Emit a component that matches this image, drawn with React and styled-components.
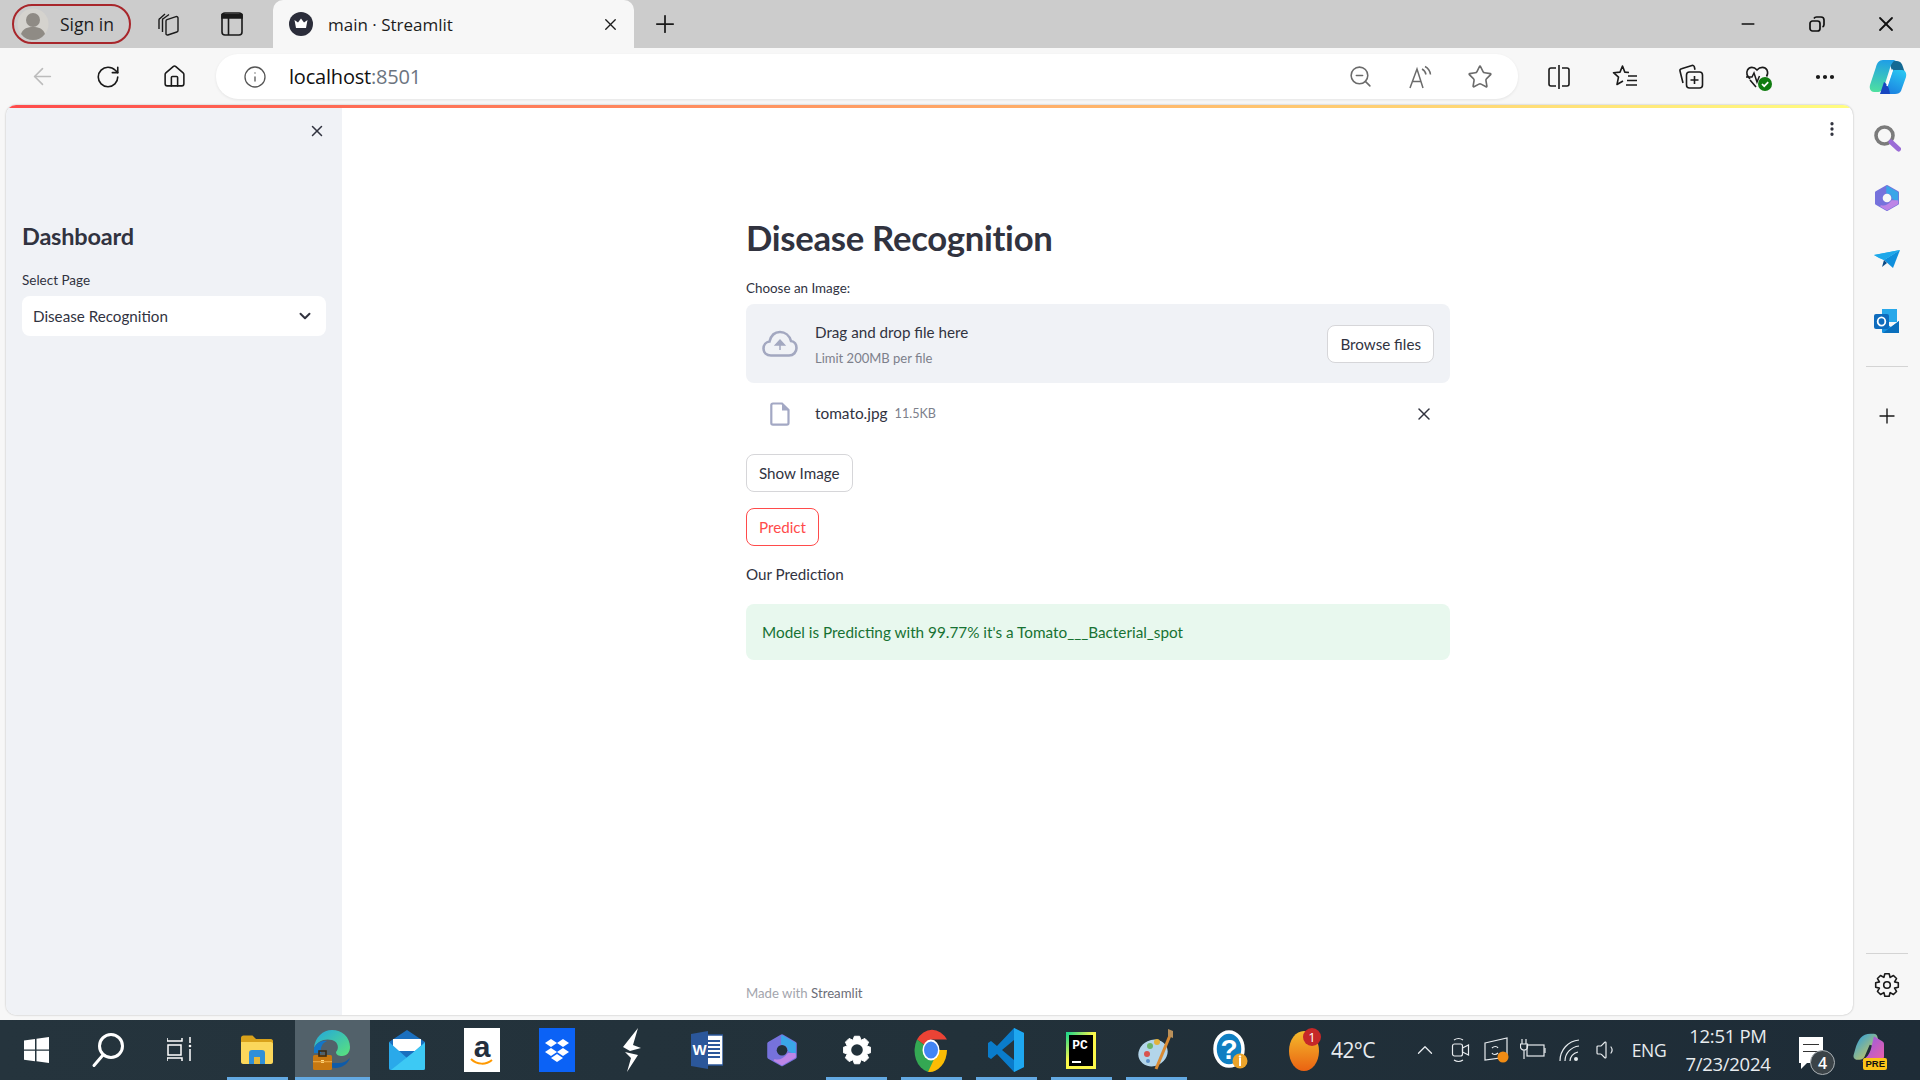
import React from "react";
import styled, { createGlobalStyle } from "styled-components";
import {
  ArrowLeft, RotateCw, Home, Info, ZoomOut, Star, X, Plus, Minus, MoreHorizontal,
  MoreVertical, ChevronDown, ChevronUp, Volume1,
} from "lucide-react";

const UI = `"Open Sans", "Noto Sans", sans-serif`;
const APP = `"Lato", "Noto Sans", sans-serif`;

const Global = createGlobalStyle`
  html, body { margin: 0; padding: 0; height: 100%; overflow: hidden; }
  #root { height: 100%; }
  * { box-sizing: border-box; }
`;

const Screen = styled.div`
  width: 1920px;
  height: 1080px;
  display: flex;
  flex-direction: column;
  background: #f7f7f7;
  font-family: ${UI};
`;

/* ---------- tab strip ---------- */
const TabStrip = styled.div`
  height: 48px;
  flex: none;
  background: #cccccc;
  display: flex;
  align-items: center;
  padding-left: 12px;
`;
const SignIn = styled.div`
  width: 119px;
  height: 40px;
  border: 2px solid #a8262b;
  border-radius: 20px;
  display: flex;
  align-items: center;
  gap: 11px;
  padding-left: 3px;
  font-size: 17.5px;
  color: #1c1c1c;
`;
const StripIcon = styled.div`
  width: ${(p) => p.$w}px;
  display: flex;
  justify-content: center;
  align-items: center;
  color: #1a1a1a;
`;
const Tab = styled.div`
  width: 361px;
  height: 48px;
  margin-left: 16px;
  background: #f7f7f7;
  border-radius: 10px 10px 0 0;
  display: flex;
  align-items: center;
  padding: 0 14px 0 16px;
  gap: 15px;
  font-size: 17px;
  color: #1c1c1c;
`;
const TabTitle = styled.span`
  flex: 1;
`;
const WindowButtons = styled.div`
  margin-left: auto;
  display: flex;
`;
const WindowButton = styled.div`
  width: 69px;
  height: 48px;
  display: flex;
  align-items: center;
  justify-content: center;
  color: #111;
`;

/* ---------- toolbar ---------- */
const Toolbar = styled.div`
  height: 57px;
  flex: none;
  background: #f7f7f7;
  display: flex;
  align-items: flex-start;
  padding: 6px 0 0 9px;
`;
const ToolButton = styled.div`
  width: ${(p) => p.$w || 66}px;
  height: 45px;
  flex: none;
  display: flex;
  align-items: center;
  justify-content: center;
  color: ${(p) => p.$color || "#1a1a1a"};
`;
const AddressBar = styled.div`
  width: 1302px;
  height: 45px;
  flex: none;
  margin-left: 9px;
  margin-right: 8px;
  background: #fff;
  border-radius: 22px;
  box-shadow: 0 1px 3px rgba(0, 0, 0, 0.08);
  display: flex;
  align-items: center;
  padding-left: 27px;
`;
const Url = styled.div`
  margin-left: 22px;
  flex: 1;
  font-size: 20px;
  color: #111;
  letter-spacing: -0.2px;
  span {
    color: #6c7480;
  }
`;

/* ---------- page + rail ---------- */
const Body = styled.div`
  flex: 1;
  display: flex;
  min-height: 0;
  padding-left: 6px;
`;
const Page = styled.div`
  width: 1847px;
  height: 910px;
  position: relative;
  display: flex;
  background: #fff;
  border-radius: 10px;
  overflow: hidden;
  box-shadow: 0 0 2px rgba(0, 0, 0, 0.3);
`;
const Decoration = styled.div`
  position: absolute;
  inset: 0 0 auto 0;
  height: 3px;
  background: linear-gradient(90deg, #ff4b4b, #fffd80);
`;
const Sidebar = styled.aside`
  width: 336px;
  flex: none;
  background: #f0f2f6;
  padding: 17px 16px 0 16px;
  color: #31333f;
  font-family: ${APP};
`;
const SideClose = styled.div`
  display: flex;
  justify-content: flex-end;
  height: 20px;
  color: #31333f;
`;
const SideTitle = styled.h2`
  margin: 78px 0 0;
  font-size: 23.5px;
  line-height: 32px;
  font-weight: 700;
  letter-spacing: -0.2px;
`;
const SideLabel = styled.div`
  margin-top: 18px;
  font-size: 13.5px;
  line-height: 20px;
`;
const Select = styled.div`
  margin-top: 6px;
  height: 40px;
  background: #fff;
  border-radius: 8px;
  display: flex;
  align-items: center;
  justify-content: space-between;
  padding: 0 12px 0 11px;
  font-size: 15.2px;
`;
const Main = styled.main`
  flex: 1;
  position: relative;
  display: flex;
  flex-direction: column;
  align-items: flex-start;
  padding: 0 0 0 404px;
  font-family: ${APP};
  color: #31333f;
`;
const Column = styled.div`
  width: 704px;
  flex: 1;
  display: flex;
  flex-direction: column;
  align-items: flex-start;
  padding-top: 109px;
`;
const Title = styled.h1`
  margin: 0;
  font-size: 34.7px;
  line-height: 48px;
  font-weight: 700;
  letter-spacing: -0.3px;
`;
const FieldLabel = styled.div`
  margin-top: 16px;
  font-size: 13.4px;
  line-height: 20px;
`;
const Uploader = styled.div`
  margin-top: 6px;
  width: 100%;
  height: 79px;
  background: #f0f2f6;
  border-radius: 8px;
  display: flex;
  align-items: center;
  padding: 0 16px;
`;
const UploadIcon = styled.div`
  width: 36px;
  display: flex;
  justify-content: center;
  color: #a3a8c0;
`;
const UploadText = styled.div`
  margin-left: 17px;
  flex: 1;
`;
const DragText = styled.div`
  font-size: 15.2px;
  line-height: 24px;
`;
const LimitText = styled.div`
  font-size: 13px;
  line-height: 20px;
  margin-top: 4px;
  color: #7d808b;
`;
const Button = styled.div`
  height: 38px;
  padding: 0 12px;
  background: #fff;
  border: 1px solid ${(p) => (p.$accent ? "#ff4b4b" : "#d6d6d9")};
  border-radius: 8px;
  color: ${(p) => (p.$accent ? "#ff4b4b" : "#31333f")};
  display: flex;
  align-items: center;
  font-size: 15.2px;
  margin-top: ${(p) => p.$top || 0}px;
`;
const FileRow = styled.div`
  width: 100%;
  height: 50px;
  margin-top: 6px;
  display: flex;
  align-items: center;
  padding: 0 16px;
`;
const FileName = styled.span`
  margin-left: 17px;
  font-size: 15.4px;
  margin-top: -2px;
`;
const FileSize = styled.span`
  margin-left: 7px;
  font-size: 12.6px;
  color: #7d808b;
  flex: 1;
  margin-top: -2px;
`;
const Prediction = styled.div`
  margin-top: 16px;
  font-size: 15.2px;
  line-height: 24px;
`;
const Alert = styled.div`
  margin-top: 18px;
  width: 100%;
  height: 56px;
  background: #e8f8ee;
  border-radius: 8px;
  display: flex;
  align-items: center;
  padding-left: 16px;
  color: #177233;
  font-size: 15.3px;
`;
const Footer = styled.div`
  margin-top: auto;
  margin-bottom: 12px;
  font-size: 13.2px;
  line-height: 20px;
  color: #a3a5ad;
  span {
    color: #6c6e78;
  }
`;
const PageMenu = styled.div`
  position: absolute;
  top: 15px;
  right: 12px;
  color: #31333f;
`;
const Rail = styled.div`
  flex: 1;
  display: flex;
  flex-direction: column;
  align-items: center;
  padding-top: 2px;
  height: 910px;
`;
const RailIcon = styled.div`
  height: 61px;
  flex: none;
  display: flex;
  align-items: center;
  justify-content: center;
  color: #1a1a1a;
`;
const RailRule = styled.div`
  width: 42px;
  height: 1px;
  background: #d4d4d4;
  flex: none;
  margin: ${(p) => p.$margin};
`;

/* ---------- taskbar ---------- */
const Taskbar = styled.div`
  height: 60px;
  flex: none;
  margin-top: auto;
  background: linear-gradient(90deg, #25343d, #22313a 50%, #1e2c37);
  display: flex;
  align-items: stretch;
  color: #fff;
`;
const SystemSlot = styled.div`
  width: 72px;
  display: flex;
  align-items: center;
  justify-content: center;
`;
const Apps = styled.div`
  display: flex;
  margin-left: 4px;
`;
const AppSlot = styled.div`
  width: 74.9px;
  position: relative;
  display: flex;
  align-items: center;
  justify-content: center;
  background: ${(p) => (p.$active ? "#52616a" : "transparent")};
  &::after {
    content: "";
    display: ${(p) => (p.$open ? "block" : "none")};
    position: absolute;
    bottom: 0;
    left: ${(p) => (p.$active ? 0 : 7)}px;
    right: ${(p) => (p.$active ? 0 : 7)}px;
    height: 3px;
    background: #63a9e2;
  }
`;
const Tray = styled.div`
  margin-left: auto;
  display: flex;
  align-items: center;
  padding-right: 15px;
  color: #e8ecef;
`;
const Temp = styled.span`
  margin-left: 10px;
  font-size: 21px;
  width: 75px;
  letter-spacing: -0.6px;
`;
const TrayIcon = styled.div`
  width: ${(p) => p.$w || 36}px;
  display: flex;
  justify-content: center;
  align-items: center;
`;
const Lang = styled.div`
  width: 48px;
  text-align: center;
  font-size: 17.5px;
  letter-spacing: -0.3px;
`;
const Clock = styled.div`
  width: 110px;
  text-align: center;
  font-size: 18.5px;
  line-height: 28px;
  margin: 0 6px 0 0;
  letter-spacing: -0.3px;
`;

/* ---------- drawn icons ---------- */
const gearPath = (cx, cy, outer, inner, teeth) => {
  const pts = [];
  const step = (Math.PI * 2) / teeth;
  for (let i = 0; i < teeth; i++) {
    const a = i * step - Math.PI / 2;
    [[-0.5, inner], [-0.24, outer], [0.24, outer], [0.5, inner]].forEach(([k, r]) => {
      pts.push(`${(cx + Math.cos(a + k * step) * r).toFixed(2)} ${(cy + Math.sin(a + k * step) * r).toFixed(2)}`);
    });
  }
  return `M${pts.join("L")}z`;
};

const Avatar = () => (
  <svg width="32" height="32" viewBox="0 0 32 32">
    <circle cx="16" cy="16" r="15.5" fill="#d5d3ce" />
    <circle cx="16" cy="12" r="7" fill="#8f8b85" />
    <path d="M4 26c2-6 7-7 12-7s10 1 12 7a15 15 0 0 1-24 0z" fill="#8f8b85" />
  </svg>
);
const Workspaces = () => (
  <svg width="26" height="26" viewBox="0 0 26 26" fill="none" stroke="#1a1a1a" strokeWidth="1.400" strokeLinejoin="round">
    <path d="M3 18V9c0-.5.2-1 .7-1.300L9 3" />
    <path d="M6.500 21V9c0-.5.2-1 .7-1.300L13 3.500" />
    <path d="M10 10c0-.6.4-1.200 1-1.400l9-3c1-.3 2 .4 2 1.400v12.500c0 .7-.5 1.300-1.200 1.500l-9 3c-1 .3-1.800-.4-1.800-1.300z" />
  </svg>
);
const TabActions = () => (
  <svg width="24" height="26" viewBox="0 0 24 26" fill="none" stroke="#1a1a1a" strokeWidth="1.600">
    <rect x="2" y="2" width="20" height="22" rx="3" />
    <path d="M2 3.500h20v3.500H2z" fill="#1a1a1a" />
    <path d="M8.500 7v17" />
  </svg>
);
const Favicon = () => (
  <svg width="24" height="24" viewBox="0 0 24 24">
    <circle cx="12" cy="12" r="12" fill="#2b2d3a" />
    <path d="M5.500 8l3.500 2.500L12 6.500l3 4L18.500 8l-1.500 8H7z" fill="#fff" />
  </svg>
);
const Restore = () => (
  <svg width="18" height="18" viewBox="0 0 18 18" fill="none" stroke="#111" strokeWidth="1.700">
    <rect x="2" y="6" width="10" height="10" rx="2.500" />
    <path d="M6 3.500C6.500 2.500 7.500 2 8.500 2H13c1.700 0 3 1.300 3 3v4.500c0 1-.5 2-1.500 2.500" />
  </svg>
);
const ReadAloud = () => (
  <svg width="26" height="26" viewBox="0 0 26 26" fill="none" stroke="#6b6b6b" strokeWidth="1.500">
    <path d="M3 24L10 5l6 19M5.500 17.500h9" />
    <path d="M15 5c2 1 3.500 3 4 5.500M18 2.500c3 1.500 5 4.500 5.500 8" />
  </svg>
);
const Split = () => (
  <svg width="24" height="26" viewBox="0 0 24 26" fill="none" stroke="#1a1a1a" strokeWidth="1.600">
    <path d="M9 4H4a2 2 0 0 0-2 2v14a2 2 0 0 0 2 2h5M15 4h5a2 2 0 0 1 2 2v14a2 2 0 0 1-2 2h-5" />
    <path d="M12 1v24" />
  </svg>
);
const Favorites = () => (
  <svg width="26" height="26" viewBox="0 0 26 26" fill="none" stroke="#1a1a1a" strokeWidth="1.600" strokeLinejoin="round">
    <path d="M17 8.500l-4.200-.4L10.500 2 8 8.100 1.500 8.700l5 4.500L5 20.500l6-3.500" />
    <path d="M16 12h9M15 16.500h10M14 21h11" />
  </svg>
);
const Collections = () => (
  <svg width="26" height="28" viewBox="0 0 26 28" fill="none" stroke="#1a1a1a" strokeWidth="1.600">
    <path d="M5 20L2 8c-.3-1.200.3-2 1.500-2.300L14 2.500c1-.3 2 .2 2.300 1.200l.7 3" />
    <rect x="8.500" y="9" width="16" height="16" rx="3" />
    <path d="M16.500 13v8M12.500 17h8" />
  </svg>
);
const Health = () => (
  <svg width="30" height="30" viewBox="0 0 30 30" fill="none">
    <path d="M6 17C3 14 2 11 3.500 8 5.500 4.500 10 4.500 13 8c3-3.500 8-3.500 10 0 1 2 1 4-.5 6.500M12 25l-6-7" stroke="#1a1a1a" strokeWidth="1.600" />
    <path d="M2 15h6l2-4 3 9 2.500-6" stroke="#1a1a1a" strokeWidth="1.500" />
    <circle cx="21" cy="22" r="7" fill="#107c10" />
    <path d="M18 22l2.200 2.200 4-4" stroke="#fff" strokeWidth="1.700" />
  </svg>
);
const Copilot = () => (
  <svg width="38" height="36" viewBox="0 0 38 36">
    <defs>
      <linearGradient id="copA" x1="0.4" y1="0" x2="0.3" y2="1">
        <stop offset="0" stopColor="#1f9fe6" />
        <stop offset="1" stopColor="#4fe0a0" />
      </linearGradient>
      <linearGradient id="copB" x1="0.8" y1="0" x2="0.3" y2="1">
        <stop offset="0" stopColor="#2ac6f2" />
        <stop offset="1" stopColor="#1a7fe0" />
      </linearGradient>
    </defs>
    <path d="M20 2h8c3 0 5 2 6 6l2 6c-3-3-8-3-13-2z" fill="#136a94" />
    <path d="M14 1h13c-3 1-5 4-6 8L15 28c-1 3-3 5-7 5H5c-3 0-5-3-4-7L7 8c1-4 3-7 7-7z" fill="url(#copA)" />
    <path d="M26 11h7c3 0 5 3 4 7l-5 14c-1 2-3 3-6 3H12c3-1 5-3 6-7l5-15c.5-1.500 1.500-2 3-2z" fill="url(#copB)" />
    <path d="M11 35l4-12c2 1 5 4 6 12z" fill="#1746c0" />
    <path d="M23.500 10.500L18 27" stroke="#fff" strokeWidth="1.500" />
  </svg>
);
const RailSearch = () => (
  <svg width="28" height="28" viewBox="0 0 28 28" fill="none">
    <circle cx="11.500" cy="11.500" r="8.500" stroke="#7b7b7b" strokeWidth="3.600" />
    <path d="M18 18l7.500 7" stroke="#9b6cd6" strokeWidth="5" strokeLinecap="round" />
  </svg>
);
const M365 = ({ size = 26, hole = "#f7f7f7" }) => (
  <svg width={size} height={size * 1.08} viewBox="0 0 26 28">
    <path d="M13 2.500l10.500 6v11L13 25.500 2.500 19.500v-11z" fill="#7672dc" stroke="#7672dc" strokeWidth="3" strokeLinejoin="round" />
    <path d="M13 2.500L23.500 8.500V17l-5-3c0-3-2.500-5-5.500-5z" fill="#3aa6e8" stroke="#3aa6e8" strokeWidth="1.500" strokeLinejoin="round" />
    <path d="M23.500 17v2.500L13 25.500l-6-3.500c4 1 8-1 11-5z" fill="#bd85e6" stroke="#bd85e6" strokeWidth="1.500" strokeLinejoin="round" />
    <circle cx="13" cy="14" r="4.300" fill={hole} />
  </svg>
);
const Send = () => (
  <svg width="26" height="20" viewBox="0 0 26 20">
    <path d="M0 5L26 0 10 10z" fill="#29b6f0" />
    <path d="M26 0l-7 18-9-8z" fill="#0f8fdc" />
    <path d="M10 10l-2 7 5-4z" fill="#0b4a86" />
    <path d="M0 5l5 3 5 2 16-10z" fill="#1ea8ea" />
  </svg>
);
const Outlook = () => (
  <svg width="26" height="26" viewBox="0 0 26 26">
    <rect x="8" y="1" width="15" height="13" fill="#28a8ea" />
    <path d="M8 13l9 6 8-6v11a1 1 0 0 1-1 1H9a1 1 0 0 1-1-1z" fill="#1490df" />
    <path d="M25 13v12H9z" fill="#0a6fbc" />
    <rect x="0" y="6" width="15" height="15" rx="2" fill="#0f6cbd" />
    <ellipse cx="7.500" cy="13.500" rx="3.800" ry="4.200" fill="none" stroke="#fff" strokeWidth="1.800" />
  </svg>
);
const WinLogo = () => (
  <svg width="25" height="26" viewBox="0 0 25 26" fill="#fff">
    <path d="M0 3.500l11-1.500v10.500H0zM12.500 1.800L25 0v12.500H12.500zM0 13.800h11v10.500L0 22.800zM12.500 13.800H25V26l-12.500-1.800z" />
  </svg>
);
const TaskSearch = () => (
  <svg width="34" height="36" viewBox="0 0 34 36" fill="none" stroke="#fff" strokeWidth="3">
    <circle cx="20" cy="14" r="11.500" />
    <path d="M12 23L3 33.500" strokeLinecap="round" />
  </svg>
);
const TaskView = () => (
  <svg width="26" height="26" viewBox="0 0 26 26" fill="none" stroke="#fff" strokeWidth="1.500">
    <path d="M0 1v3h15V1M0 24v-3h15v3" />
    <rect x="1" y="8" width="13" height="10" />
    <path d="M23 0v6M23 12v12" />
    <circle cx="23" cy="9" r="1.300" fill="#fff" stroke="none" />
  </svg>
);
const Explorer = () => (
  <svg width="32" height="30" viewBox="0 0 32 30">
    <path d="M0 3c0-1.500 1-2.500 2.500-2.500h9L15 4h15c1 0 2 1 2 2v3H0z" fill="#d9a21b" />
    <path d="M0 7h30c1 0 2 1 2 2v18c0 1-1 2-2 2H2c-1 0-2-1-2-2z" fill="#fbd75b" />
    <path d="M8 29V18c0-2 1-3 3-3h10c2 0 3 1 3 3v11h-5v-7h-6v7z" fill="#2f8fd8" />
    <rect x="13" y="22" width="6" height="7" fill="#e7b93a" />
  </svg>
);
const Edge = () => (
  <svg width="38" height="40" viewBox="0 0 38 40">
    <defs>
      <linearGradient id="edgeA" x1="0" y1="0" x2="1" y2="1">
        <stop offset="0" stopColor="#22a6e0" />
        <stop offset="1" stopColor="#5be37a" />
      </linearGradient>
    </defs>
    <path d="M1 18C2 7 10 0 19 0c10 0 18 7 18 17 0 5-3 9-8 9-3 0-6-1-6-4 3-3 3-10-4-12C12 8 4 11 1 18z" fill="url(#edgeA)" />
    <path d="M1 18c3-6 9-8 13-7-5 2-7 7-6 12H1z" fill="#1376c9" />
    <path d="M37 28c-3 8-12 12-20 9l-2-4h11c4 0 8-2 11-5z" fill="#0f5ba8" />
    <rect x="0" y="25" width="19" height="15" rx="1.500" fill="#c87810" />
    <rect x="6" y="21" width="7" height="5" fill="none" stroke="#3b2a12" strokeWidth="1.600" />
    <rect x="8" y="30" width="3" height="3" fill="#ffe08a" />
    <path d="M0 31h19v1.300H0z" fill="#e8a33d" />
  </svg>
);
const Mail = () => (
  <svg width="36" height="40" viewBox="0 0 36 40">
    <path d="M0 12L18 0l18 12v26a2 2 0 0 1-2 2H2a2 2 0 0 1-2-2z" fill="#1a6fbe" />
    <path d="M4 9h28v12H4z" fill="#fff" />
    <path d="M0 12l18 16L36 12v26a2 2 0 0 1-2 2H2a2 2 0 0 1-2-2z" fill="#2aa9ea" />
    <path d="M36 13v25a2 2 0 0 1-2 2H2z" fill="#3dc9f4" />
  </svg>
);
const AmazonTile = styled.div`
  width: 36px;
  height: 44px;
  background: #fff;
  color: #232f3e;
  display: flex;
  align-items: flex-start;
  justify-content: center;
  font: 700 30px/38px "Liberation Sans", sans-serif;
  position: relative;
  svg {
    position: absolute;
    left: 6px;
    bottom: 6px;
  }
`;
const Dropbox = () => (
  <svg width="36" height="44" viewBox="0 0 36 44">
    <rect width="36" height="44" fill="#0b62f6" />
    <path d="M12 11l6 4-6 4-6-4zM24 11l6 4-6 4-6-4zM12 20l6 4-6 4-6-4zM24 20l6 4-6 4-6-4zM18 26l6 4-6 4-6-4z" fill="#fff" />
  </svg>
);
const Spark = () => (
  <svg width="20" height="44" viewBox="0 0 20 44" fill="#fff">
    <path d="M16 0L1 19l7 4 11-3-8-3z" />
    <path d="M3 24l13 3-11 17 4-14z" />
  </svg>
);
const Word = () => (
  <svg width="32" height="38" viewBox="0 0 32 38">
    <rect x="10" y="4" width="22" height="30" fill="#fff" stroke="#2b579a" strokeWidth="1.500" />
    <path d="M15 10h14M15 14h14M15 18h14M15 22h14M15 26h14" stroke="#2b579a" strokeWidth="1.800" />
    <path d="M0 3l17-3v38L0 35z" fill="#2b579a" />
    <text x="8.500" y="24" fontSize="15" fontWeight="700" fill="#fff" textAnchor="middle" fontFamily="Liberation Sans">W</text>
  </svg>
);
const TaskGear = () => (
  <svg width="28" height="30" viewBox="0 0 28 30">
    <path d={gearPath(14, 15, 14, 10.5, 8)} fill="#fff" stroke="#fff" strokeWidth="1" strokeLinejoin="round" />
    <circle cx="14" cy="15" r="5.800" fill="#22313a" />
  </svg>
);
const RailGear = () => (
  <svg width="26" height="26" viewBox="0 0 26 26" fill="none" stroke="#1a1a1a" strokeWidth="1.600" strokeLinejoin="round">
    <path d={gearPath(13, 13, 11.500, 8.200, 8)} />
    <circle cx="13" cy="13" r="3.300" />
  </svg>
);
const Chrome = () => (
  <svg width="36" height="44" viewBox="0 0 36 36" preserveAspectRatio="none">
    <path d="M18 18L4 9.500A18 18 0 0 1 34 9.500H18z" fill="#ea4335" />
    <path d="M18 18L4 9.500A18 18 0 0 0 15 36l8-9z" fill="#34a853" />
    <path d="M18 18h16A18 18 0 0 1 15 36l8-14z" fill="#fbbc05" />
    <circle cx="18" cy="18" r="8.500" fill="#fff" />
    <circle cx="18" cy="18" r="7" fill="#4285f4" />
  </svg>
);
const VSCode = () => (
  <svg width="36" height="44" viewBox="0 0 36 44">
    <path d="M26 0l10 5v34l-10 5-17-18-6 5-3-2V15l3-2 6 5z" fill="#0a7ccb" />
    <path d="M26 0l10 5v34l-10 5z" fill="#1ea7f0" />
    <path d="M26 12L14 22l12 10z" fill="#25343d" />
  </svg>
);
const PyCharmTile = styled.div`
  width: 30px;
  height: 37px;
  background: #000;
  border: 3px solid;
  border-image: linear-gradient(135deg, #21d789, #fcf84a 45%) 1;
  color: #fff;
  font: 700 13px/15px "Liberation Mono", monospace;
  padding: 3px 0 0 3px;
  position: relative;
  &::after {
    content: "";
    position: absolute;
    left: 3px;
    bottom: 3px;
    width: 9px;
    height: 2px;
    background: #fff;
  }
`;
const Paint = () => (
  <svg width="36" height="42" viewBox="0 0 36 42">
    <ellipse cx="15" cy="24" rx="15" ry="13" transform="rotate(-25 15 24)" fill="#b3d5ea" />
    <circle cx="9" cy="25" r="3" fill="#d9534f" />
    <circle cx="12" cy="17" r="3" fill="#6bb56b" />
    <circle cx="19" cy="13" r="3" fill="#e3b23c" />
    <circle cx="10" cy="32" r="2" fill="#5a8fc9" />
    <path d="M33 4L18 40" stroke="#d98a33" strokeWidth="3" />
    <path d="M30 0l5 2 0 7-5-2z" fill="#b9905a" />
  </svg>
);
const Help = () => (
  <svg width="36" height="42" viewBox="0 0 36 42">
    <ellipse cx="16" cy="20" rx="14" ry="17" fill="#0f7fc2" stroke="#fff" strokeWidth="3.500" />
    <text x="16" y="30" fontSize="28" fontWeight="700" fill="#fff" textAnchor="middle" fontFamily="Liberation Sans">?</text>
    <circle cx="27" cy="32" r="7.500" fill="#eca42b" />
    <path d="M27 29v8" stroke="#fff" strokeWidth="2" />
    <circle cx="27" cy="27.500" r="1.200" fill="#fff" />
  </svg>
);
const Weather = () => (
  <svg width="32" height="46" viewBox="0 0 32 46">
    <defs>
      <linearGradient id="sun" x1="0" y1="0" x2="0" y2="1">
        <stop offset="0" stopColor="#f4bb2c" />
        <stop offset="1" stopColor="#ea6212" />
      </linearGradient>
    </defs>
    <ellipse cx="15" cy="24" rx="15" ry="20" fill="url(#sun)" />
    <circle cx="23" cy="10" r="9" fill="#c62828" />
    <text x="23" y="15" fontSize="13" fill="#fff" textAnchor="middle" fontFamily="Open Sans">1</text>
  </svg>
);
const Meet = () => (
  <svg width="20" height="26" viewBox="0 0 20 26" fill="none" stroke="#e8ecef" strokeWidth="1.200">
    <rect x="1.500" y="7" width="10" height="12" rx="2" />
    <path d="M11.500 11l6-3v10l-6-3z" />
    <path d="M3 3c3-2 6-2 9 0M3 23c3 2 6 2 9 0" />
  </svg>
);
const Capture = () => (
  <svg width="26" height="28" viewBox="0 0 26 28" fill="none" stroke="#e8ecef" strokeWidth="1.200">
    <path d="M1 7l22-5v19L1 24z" />
    <path d="M8 12c2-2 5-2 6 0M14 17c-2 2-5 2-6 0" />
    <circle cx="19" cy="21" r="5.500" fill="#f28c13" stroke="none" />
  </svg>
);
const Battery = () => (
  <svg width="26" height="24" viewBox="0 0 26 24" fill="none" stroke="#e8ecef" strokeWidth="1.200">
    <rect x="7" y="7" width="17" height="11" />
    <path d="M25 10v5" />
    <path d="M2 1v5M6 1v5M0.500 6h7v3c0 2-2 3-3.500 3S.5 11 .5 9zM4 12v9" />
  </svg>
);
const Wifi = () => (
  <svg width="22" height="24" viewBox="0 0 22 24" fill="none" stroke="#e8ecef" strokeWidth="1.200">
    <path d="M1 23C1 12 9 3 20 2M6 23c0-8 6-14 14-15M11 23c0-4 3-8 8-9" />
    <circle cx="17" cy="21" r="2" fill="#e8ecef" stroke="none" />
  </svg>
);
const Notify = styled.div`
  position: relative;
  width: 24px;
  height: 26px;
  background: #fff;
  &::after {
    content: "";
    position: absolute;
    left: 2px;
    top: 26px;
    border-top: 6px solid #fff;
    border-right: 6px solid transparent;
  }
`;
const NotifyLines = styled.div`
  margin: 7px 4px 0;
  height: 8px;
  border-top: 1.500px solid #333;
  border-bottom: 1.500px solid #333;
`;
const NotifyCount = styled.div`
  position: absolute;
  left: 11px;
  top: 13px;
  width: 25px;
  height: 25px;
  border-radius: 50%;
  background: #3b4348;
  border: 1.500px solid #aab0b4;
  display: flex;
  align-items: center;
  justify-content: center;
  font-size: 16px;
  font-weight: 600;
  color: #fff;
  z-index: 1;
`;
const PreWrap = styled.div`
  position: relative;
  width: 34px;
  height: 40px;
  span {
    position: absolute;
    right: -1px;
    bottom: 0;
    background: #fcc419;
    color: #111;
    border-radius: 2px;
    padding: 0 2px;
    font: 700 9.500px/12px "Liberation Sans", sans-serif;
  }
`;
const CopilotColor = () => (
  <svg width="32" height="36" viewBox="0 0 38 38">
    <defs>
      <linearGradient id="cpreA" x1="0" y1="0" x2="1" y2="1">
        <stop offset="0" stopColor="#1f9be8" />
        <stop offset="1" stopColor="#f6d23c" />
      </linearGradient>
      <linearGradient id="cpreB" x1="0" y1="0" x2="1" y2="1">
        <stop offset="0" stopColor="#8a5ce8" />
        <stop offset="1" stopColor="#ef5fa7" />
      </linearGradient>
    </defs>
    <path d="M22 2h4c2 0 3.500 1 4 3l4 14-13-4-6 14c-1 2-3 4-6 4H6C3 33 1 30 2 27l2-7C7 9 12 2 22 2z" fill="url(#cpreA)" />
    <path d="M26 5l10 6c1.500 1 2 2 2 4v14c0 3-3 6-7 6H12l4-4c4-4 6-8 7-13z" fill="url(#cpreB)" />
  </svg>
);

const taskApps = [
  { icon: <Explorer />, open: true },
  { icon: <Edge />, open: true, active: true },
  { icon: <Mail /> },
  { icon: <AmazonTile>a<svg width="24" height="8" viewBox="0 0 24 8" fill="none"><path d="M1 1c6 6 15 6 21 1" stroke="#f90" strokeWidth="2" /></svg></AmazonTile> },
  { icon: <Dropbox /> },
  { icon: <Spark /> },
  { icon: <Word /> },
  { icon: <M365 size={32} hole="#22313a" /> },
  { icon: <TaskGear />, open: true },
  { icon: <Chrome />, open: true },
  { icon: <VSCode />, open: true },
  { icon: <PyCharmTile>PC</PyCharmTile>, open: true },
  { icon: <Paint />, open: true },
  { icon: <Help /> },
];

const CloudUpload = () => (
  <svg width="36" height="27" viewBox="0 0 36 27" fill="none" stroke="currentColor" strokeWidth="2.600">
    <path d="M9 25.500C4.500 25.500 1.500 22.500 1.500 18.500c0-3.500 2.500-6.500 6-7C9 5.500 13 2 18 2c5 0 9.500 3.500 11 9 3.500.5 5.500 3.500 5.500 7 0 4-3 7.500-7.500 7.500z" />
    <path d="M18 20v-9M13.500 15h9l-4.500-5z" fill="currentColor" strokeWidth="1.500" />
  </svg>
);
const FileIcon = () => (
  <svg width="20" height="24" viewBox="0 0 20 24" fill="none" stroke="#a3a8c4" strokeWidth="2.200">
    <path d="M3 1.500h9l6.500 6.500v13c0 1-.7 1.700-1.700 1.700H3c-1 0-1.700-.7-1.700-1.700V3.200C1.300 2.200 2 1.500 3 1.500z" />
    <path d="M12 1.500v7h6.500z" fill="#a3a8c4" stroke="none" />
  </svg>
);

export default function App() {
  return (
    <Screen>
      <Global />
      <TabStrip>
        <SignIn><Avatar />Sign in</SignIn>
        <StripIcon $w={76}><Workspaces /></StripIcon>
        <StripIcon $w={50}><TabActions /></StripIcon>
        <Tab>
          <Favicon />
          <TabTitle>main · Streamlit</TabTitle>
          <X size={19} strokeWidth={1.700} />
        </Tab>
        <StripIcon $w={62}><Plus size={28} strokeWidth={1.500} /></StripIcon>
        <WindowButtons>
          <WindowButton><Minus size={20} strokeWidth={1.800} /></WindowButton>
          <WindowButton><Restore /></WindowButton>
          <WindowButton><X size={24} strokeWidth={1.800} /></WindowButton>
        </WindowButtons>
      </TabStrip>

      <Toolbar>
        <ToolButton $color="#bcbcbc"><ArrowLeft size={27} strokeWidth={1.400} /></ToolButton>
        <ToolButton><RotateCw size={26} strokeWidth={1.500} /></ToolButton>
        <ToolButton><Home size={25} strokeWidth={1.500} /></ToolButton>
        <AddressBar>
          <Info size={24} strokeWidth={1.300} color="#555" />
          <Url>localhost<span>:8501</span></Url>
          <ToolButton $w={60} $color="#6b6b6b"><ZoomOut size={25} strokeWidth={1.500} /></ToolButton>
          <ToolButton $w={60}><ReadAloud /></ToolButton>
          <ToolButton $w={60} $color="#6b6b6b"><Star size={26} strokeWidth={1.500} /></ToolButton>
          <ToolButton $w={8} />
        </AddressBar>
        <ToolButton><Split /></ToolButton>
        <ToolButton><Favorites /></ToolButton>
        <ToolButton><Collections /></ToolButton>
        <ToolButton $w={69}><Health /></ToolButton>
        <ToolButton $w={64}><MoreHorizontal size={24} strokeWidth={2.200} /></ToolButton>
        <ToolButton $w={62}><Copilot /></ToolButton>
      </Toolbar>

      <Body>
        <Page>
          <Decoration />
          <Sidebar>
            <SideClose><X size={18} strokeWidth={2} /></SideClose>
            <SideTitle>Dashboard</SideTitle>
            <SideLabel>Select Page</SideLabel>
            <Select>
              Disease Recognition
              <ChevronDown size={18} strokeWidth={2.600} />
            </Select>
          </Sidebar>
          <Main>
            <PageMenu><MoreVertical size={18} strokeWidth={2.400} /></PageMenu>
            <Column>
              <Title>Disease Recognition</Title>
              <FieldLabel>Choose an Image:</FieldLabel>
              <Uploader>
                <UploadIcon><CloudUpload /></UploadIcon>
                <UploadText>
                  <DragText>Drag and drop file here</DragText>
                  <LimitText>Limit 200MB per file</LimitText>
                </UploadText>
                <Button>Browse files</Button>
              </Uploader>
              <FileRow>
                <UploadIcon><FileIcon /></UploadIcon>
                <FileName>tomato.jpg</FileName>
                <FileSize>11.5KB</FileSize>
                <X size={20} strokeWidth={1.800} />
              </FileRow>
              <Button $top={15}>Show Image</Button>
              <Button $top={16} $accent>Predict</Button>
              <Prediction>Our Prediction</Prediction>
              <Alert>Model is Predicting with 99.77% it's a Tomato___Bacterial_spot</Alert>
              <Footer>Made with <span>Streamlit</span></Footer>
            </Column>
          </Main>
        </Page>
        <Rail>
          <RailIcon><RailSearch /></RailIcon>
          <RailIcon><M365 /></RailIcon>
          <RailIcon><Send /></RailIcon>
          <RailIcon><Outlook /></RailIcon>
          <RailRule $margin="15px 0 18px" />
          <RailIcon><Plus size={24} strokeWidth={1.400} /></RailIcon>
          <RailRule $margin="auto 0 0" />
          <RailIcon><RailGear /></RailIcon>
        </Rail>
      </Body>

      <Taskbar>
        <SystemSlot><WinLogo /></SystemSlot>
        <SystemSlot><TaskSearch /></SystemSlot>
        <SystemSlot><TaskView /></SystemSlot>
        <Apps>
          {taskApps.map((app, i) => (
            <AppSlot key={i} $open={app.open} $active={app.active}>{app.icon}</AppSlot>
          ))}
        </Apps>
        <Tray>
          <Weather />
          <Temp>42°C</Temp>
          <TrayIcon $w={37}><ChevronUp size={26} strokeWidth={1.200} /></TrayIcon>
          <TrayIcon><Meet /></TrayIcon>
          <TrayIcon><Capture /></TrayIcon>
          <TrayIcon><Battery /></TrayIcon>
          <TrayIcon $w={38}><Wifi /></TrayIcon>
          <TrayIcon $w={36}><Volume1 size={24} strokeWidth={1.200} /></TrayIcon>
          <Lang>ENG</Lang>
          <Clock>12:51 PM<br />7/23/2024</Clock>
          <TrayIcon $w={44}>
            <Notify><NotifyLines /><NotifyCount>4</NotifyCount></Notify>
          </TrayIcon>
          <TrayIcon $w={72}>
            <PreWrap><CopilotColor /><span>PRE</span></PreWrap>
          </TrayIcon>
        </Tray>
      </Taskbar>
    </Screen>
  );
}
